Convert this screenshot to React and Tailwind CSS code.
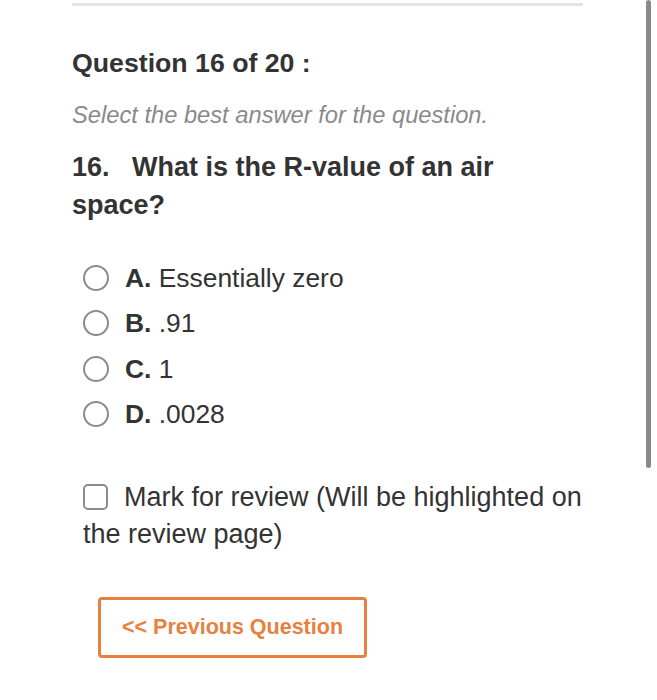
import React, { useState } from 'react';

const options = [
  { key: 'A', text: 'Essentially zero' },
  { key: 'B', text: '.91' },
  { key: 'C', text: '1' },
  { key: 'D', text: '.0028' },
];

export default function App() {
  const [picked, setPicked] = useState(null);
  const [marked, setMarked] = useState(false);

  return (
    <div className="relative min-h-[700px] w-full bg-white font-['Liberation_Sans',Arial,sans-serif] text-[#333]">
      <div className="absolute right-[6px] top-0 h-[468px] w-[5px] rounded-full bg-[#8a8a8a]" />
      <div className="pl-[72px] pr-[74px] pt-[3px]">
        <div className="h-[3px] w-full bg-[#e2e2e2]" />
        <h1 className="mt-[41px] text-[26.7px] font-bold leading-[32px]">Question 16 of 20 :</h1>
        <p className="mt-[21px] text-[23.7px] italic leading-[30px] text-[#8a8a8a]">Select the best answer for the question.</p>
        <h2 className="mt-[18px] max-w-[470px] text-[27px] font-bold leading-[38px]">
          16.&nbsp;&nbsp; What is the R-value of an air space?
        </h2>
        <div className="mt-[40px] flex flex-col gap-[17.3px] pl-[11px]">
          {options.map((o) => (
            <label key={o.key} className="flex h-[28px] cursor-pointer items-center gap-[16px] text-[26.4px] leading-[28px]">
              <span
                onClick={() => setPicked(o.key)}
                className="flex h-[26px] w-[26px] shrink-0 items-center justify-center rounded-full border-2 border-[#8c8c8c]"
              >
                {picked === o.key && <span className="h-[12px] w-[12px] rounded-full bg-[#555]" />}
              </span>
              <span>
                <b>{o.key}.</b> {o.text}
              </span>
            </label>
          ))}
        </div>
        <p className="-mr-[6px] mt-[51px] pl-[11px] text-[27px] leading-[37px]">
          <span
            onClick={() => setMarked(!marked)}
            className="mr-[16px] inline-block h-[26px] w-[25px] cursor-pointer rounded-[5px] border-2 border-[#8c8c8c] align-[-4px]"
          />
          Mark for review (Will be highlighted on the review page)
        </p>
        <button className="ml-[26px] mt-[44px] flex h-[61px] w-[269px] items-center justify-center rounded-[4px] border-[3px] border-[#e8813f] text-[21.5px] font-bold text-[#e8813f]">
          &lt;&lt; Previous Question
        </button>
      </div>
    </div>
  );
}
